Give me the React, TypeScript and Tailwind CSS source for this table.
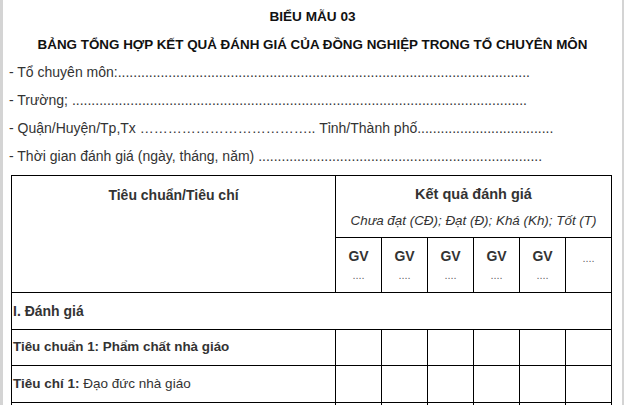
import React from 'react';

const dots = (n: number) => '.'.repeat(n);

const gvCols = ['GV', 'GV', 'GV', 'GV', 'GV'];

export default function App() {
  return (
    <div className="flex w-[626px] h-[405px] overflow-hidden bg-white font-['Liberation_Sans',Arial,sans-serif] text-[#333]">
      <div className="w-[3px] shrink-0 bg-[#d4d4d4]" />
      <div className="w-[619px] shrink-0">
        <div className="pt-[9px] text-center text-[13.6px] font-bold leading-[16px] text-[#111]">BIỂU MẪU 03</div>
        <div className="pt-[12px] text-center text-[13.4px] font-bold leading-[16px] text-[#111]">
          BẢNG TỔNG HỢP KẾT QUẢ ĐÁNH GIÁ CỦA ĐỒNG NGHIỆP TRONG TỔ CHUYÊN MÔN
        </div>
        <div className="pl-[6px] pt-[5px] text-[14px] leading-[28px] whitespace-nowrap">
          <div>- Tổ chuyên môn:{dots(106)}</div>
          <div>- Trường; {dots(117)}</div>
          <div>- Quận/Huyện/Tp,Tx ……………………………….. Tỉnh/Thành phố{dots(35)}</div>
          <div>- Thời gian đánh giá (ngày, tháng, năm) {dots(73)}</div>
        </div>
        <table className="ml-[8px] mt-[5px] border-collapse text-[14px]">
          <colgroup>
            <col className="w-[324px]" />
            {[0, 1, 2, 3, 4, 5].map((i) => (
              <col key={i} className="w-[46px]" />
            ))}
          </colgroup>
          <tbody>
            <tr className="h-[62px]">
              <td rowSpan={2} className="border border-black align-top text-center font-bold pt-[9px]">
                Tiêu chuẩn/Tiêu chí
              </td>
              <td colSpan={6} className="border border-black text-center align-top pt-[9px]">
                <div className="font-bold leading-[18px] text-[14.5px]">Kết quả đánh giá</div>
                <div className="italic leading-[18px] mt-[9px] whitespace-nowrap text-[13.4px]">Chưa đạt (CĐ); Đạt (Đ); Khá (Kh); Tốt (T)</div>
              </td>
            </tr>
            <tr className="h-[55px]">
              {gvCols.map((g, i) => (
                <td key={i} className="border border-black text-center align-top pt-[9px]">
                  <div className="font-bold leading-[18px]">{g}</div>
                  <div className="text-[11px] leading-[14px] mt-[3px] text-[#666]">....</div>
                </td>
              ))}
              <td className="border border-black text-center align-top pt-[12px] text-[11px] text-[#666]">....</td>
            </tr>
            <tr className="h-[37px]">
              <td colSpan={7} className="border border-black font-bold pl-[1px]">I. Đánh giá</td>
            </tr>
            <tr className="h-[36px]">
              <td className="border border-black font-bold pl-[1px] text-[13.4px]">Tiêu chuẩn 1: Phẩm chất nhà giáo</td>
              {[0, 1, 2, 3, 4, 5].map((i) => (
                <td key={i} className="border border-black" />
              ))}
            </tr>
            <tr className="h-[37px]">
              <td className="border border-black pl-[1px] text-[13.5px]">
                <span className="font-bold">Tiêu chí 1:</span> Đạo đức nhà giáo
              </td>
              {[0, 1, 2, 3, 4, 5].map((i) => (
                <td key={i} className="border border-black" />
              ))}
            </tr>
            <tr className="h-[37px]">
              <td className="border border-black" />
              {[0, 1, 2, 3, 4, 5].map((i) => (
                <td key={i} className="border border-black" />
              ))}
            </tr>
          </tbody>
        </table>
      </div>
      <div className="w-[2px] shrink-0 bg-[#d4d4d4]" />
      <div className="flex-1" />
    </div>
  );
}
